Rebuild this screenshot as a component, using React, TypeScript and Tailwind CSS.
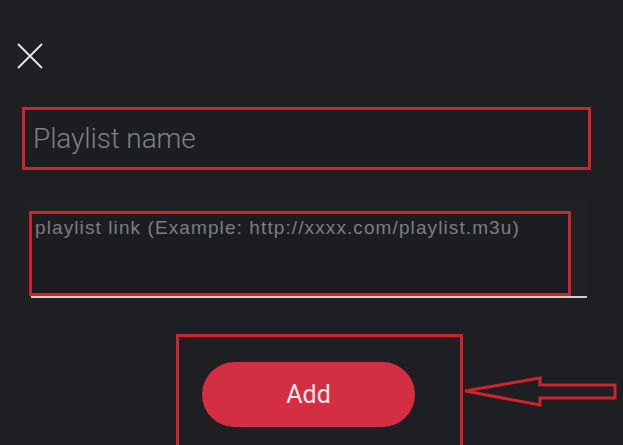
import React from 'react';

const roboto = { fontFamily: 'Roboto, "Noto Sans", sans-serif' };
const arial = { fontFamily: '"Liberation Sans", Arial, sans-serif' };

export default function App() {
  return (
    <div className="w-[623px] h-[445px] overflow-hidden bg-[#1d1f23] flex flex-col" style={roboto}>
      {/* Close */}
      <div className="pl-[17px] pt-[43px] shrink-0">
        <svg width="26" height="26" viewBox="0 0 26 26" fill="none" className="block">
          <path d="M1 1 L25 25 M25 1 L1 25" stroke="#e6e6e6" strokeWidth="1.8" />
        </svg>
      </div>

      {/* Playlist name */}
      <div className="shrink-0 ml-[22px] mt-[38px] w-[569px] h-[63px] border-[3px] border-[#d2232c] bg-[#1b1d20] flex items-center pl-[8px]">
        <span className="text-[28px] font-light text-[#7f8184] tracking-[-0.1px] leading-none">Playlist name</span>
      </div>

      {/* Playlist link */}
      <div className="shrink-0 ml-[25px] mt-[30px] w-[563px] h-[99px] bg-[#1f2125] pt-[11px] pl-[4px] flex flex-col">
        <div className="shrink-0 w-[542px] h-[85px] border-[3px] border-[#d2232c] bg-[#1b1d20] pl-[3px] pt-[3px]" style={arial}>
          <span className="text-[19px] text-[#7c7e81] leading-[22px] tracking-[1.1px] whitespace-nowrap">
            playlist link (Example: http://xxxx.com/playlist.m3u)
          </span>
        </div>
        <div className="shrink-0 ml-[2px] w-[556px] h-[2px] bg-[#cfcfcf]" />
      </div>

      {/* Add */}
      <div className="shrink-0 mt-[35px] ml-[176px] flex items-start">
        <div className="shrink-0 w-[287px] h-[120px] border-[3px] border-[#d2232c] pl-[23px] pt-[25px]">
          <button className="w-[213px] h-[65px] rounded-full bg-[#d42e43] text-[#f5e9ea] text-[25px]">
            Add
          </button>
        </div>
        <svg width="156" height="32" viewBox="0 0 156 32" className="mt-[42px] shrink-0" fill="none">
          <path
            d="M2 15 L77 2 L77 9 L152 9 L152 22 L77 22 L77 29 Z"
            stroke="#d2232c"
            strokeWidth="3"
            strokeLinejoin="miter"
          />
        </svg>
      </div>
    </div>
  );
}
